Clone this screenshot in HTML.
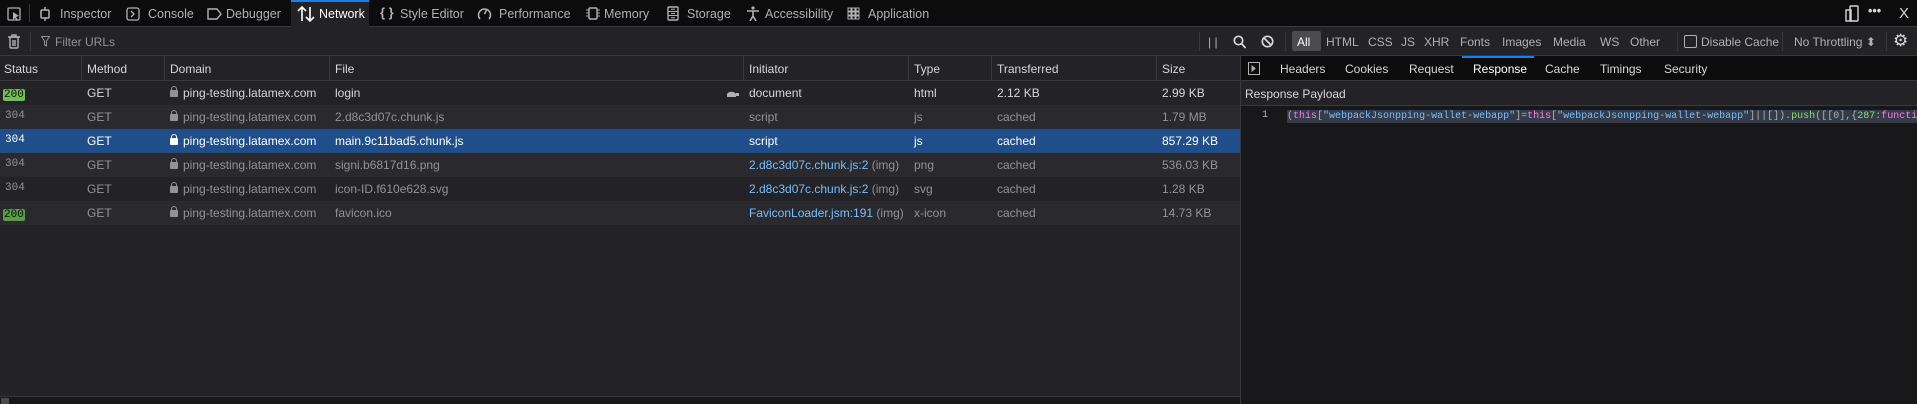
<!DOCTYPE html>
<html><head><meta charset="utf-8"><style>
*{margin:0;padding:0;box-sizing:border-box}
body{width:1917px;height:404px;background:#232327;font-family:"Liberation Sans",sans-serif;font-size:12px;color:#d7d7db;position:relative;overflow:hidden}
.a{position:absolute;white-space:nowrap}
#top{left:0;top:0;width:1917px;height:27px;background:#0c0c0d;border-bottom:1px solid #38383d}
#top .t{position:absolute;top:7px;color:#b1b1b3;font-size:12.5px}
#filt{left:0;top:27px;width:1917px;height:29px;background:#232327;border-bottom:1px solid #38383d}
.f{position:absolute;top:8px;color:#b1b1b3;font-size:12px}
#hdr{left:0;top:56px;width:1240px;height:25px;border-bottom:1px solid #38383d}
.col{position:absolute;top:0;height:100%;border-left:1px solid #38383d}
.h{position:absolute;top:6px;color:#d7d7db}
.row{position:absolute;left:0;width:1240px;height:24px}
.row span{position:absolute;top:5px}
.alt{background:#2a2a2e}
.sel{background:#204e8a;color:#fff}
.dim{color:#939395}
.b2{background:#70bf53;color:#0c0c0d;border-radius:2px;padding:0 1px;font-family:"Liberation Mono",monospace;font-size:11px}
.lnk{color:#75bfff}
.lock{display:inline-block;width:8px;height:7px;background:#939395;border-radius:1px;position:relative;top:0px;margin-right:5px}
.lock:before{content:"";position:absolute;left:1px;top:-4px;width:4px;height:4px;border:1px solid #939395;border-bottom:none;border-radius:3px 3px 0 0}
.sel .lock{background:#fff}
.sel .lock:before{border-color:#fff}
#rp{left:1240px;top:56px;width:677px;height:348px;background:#18181a;border-left:1px solid #38383d}
.dv{position:absolute;top:5px;width:1px;height:19px;background:#38383d}
</style></head><body>
<div class="a" id="top">
 <svg class="a" style="left:7px;top:7px" width="14" height="14"><rect x="1" y="1" width="12" height="12" rx="1" fill="none" stroke="#b1b1b3" stroke-width="1.3"/><path d="M6 5l6 4-3 1 2 3-1 1-2-3-2 2z" fill="#b1b1b3"/></svg>
 <div class="a" style="left:29px;top:4px;width:1px;height:18px;background:#38383d"></div>
 <svg class="a" style="left:39px;top:7px" width="12" height="14"><rect x="2" y="3" width="8" height="8" rx="1" fill="none" stroke="#b1b1b3" stroke-width="1.5"/><path d="M6 0v3M6 11v3" stroke="#b1b1b3" stroke-width="1.5"/></svg>
 <span class="t" style="left:60px">Inspector</span>
 <svg class="a" style="left:126px;top:7px" width="14" height="14"><rect x="1" y="1" width="12" height="12" rx="2" fill="none" stroke="#b1b1b3" stroke-width="1.3"/><path d="M5 4l3 3-3 3" fill="none" stroke="#b1b1b3" stroke-width="1.3"/></svg>
 <span class="t" style="left:148px">Console</span>
 <svg class="a" style="left:207px;top:7px" width="15" height="14"><path d="M1 2h9l4 5-4 5H1z" fill="none" stroke="#b1b1b3" stroke-width="1.4"/></svg>
 <span class="t" style="left:226px">Debugger</span>
 <div class="a" style="left:291px;top:0;width:78px;height:27px;background:#232327;border-top:2px solid #0a84ff"></div>
 <svg class="a" style="left:297px;top:6px" width="18" height="16"><path d="M5 15V1M1 5l4-4 4 4M13 1v14M9 11l4 4 4-4" fill="none" stroke="#fff" stroke-width="1.6"/></svg>
 <span class="t" style="left:319px;color:#fff">Network</span>
 <span class="t" style="left:380px;font-weight:bold;font-size:13px;top:5px">{ }</span>
 <span class="t" style="left:400px">Style Editor</span>
 <svg class="a" style="left:477px;top:6px" width="15" height="15"><path d="M3 13A6 6 0 1 1 12 13" fill="none" stroke="#b1b1b3" stroke-width="1.5"/><path d="M7.5 8l2-4" stroke="#b1b1b3" stroke-width="1.5"/></svg>
 <span class="t" style="left:499px">Performance</span>
 <svg class="a" style="left:586px;top:6px" width="14" height="15"><rect x="3" y="2" width="8" height="11" rx="1" fill="none" stroke="#b1b1b3" stroke-width="1.4"/><path d="M0 4h3M0 7h3M0 10h3M11 4h3M11 7h3M11 10h3" stroke="#b1b1b3"/></svg>
 <span class="t" style="left:604px">Memory</span>
 <svg class="a" style="left:667px;top:6px" width="12" height="15"><rect x="1" y="1" width="10" height="13" rx="1" fill="none" stroke="#b1b1b3" stroke-width="1.4"/><path d="M1 5.5h10M1 9.5h10M4 3.3h4M4 7.5h4M4 11.7h4" stroke="#b1b1b3"/></svg>
 <span class="t" style="left:687px">Storage</span>
 <svg class="a" style="left:746px;top:6px" width="14" height="15"><circle cx="7" cy="2" r="1.6" fill="#b1b1b3"/><path d="M1 5h12M7 5v5M7 10l-3 5M7 10l3 5" stroke="#b1b1b3" stroke-width="1.6" fill="none"/></svg>
 <span class="t" style="left:765px">Accessibility</span>
 <svg class="a" style="left:847px;top:7px" width="13" height="13" fill="none" stroke="#b1b1b3"><rect x="1" y="1" width="3" height="3"/><rect x="5" y="1" width="3" height="3"/><rect x="9" y="1" width="3" height="3"/><rect x="1" y="5" width="3" height="3"/><rect x="5" y="5" width="3" height="3"/><rect x="9" y="5" width="3" height="3"/><rect x="1" y="9" width="3" height="3"/><rect x="5" y="9" width="3" height="3"/><rect x="9" y="9" width="3" height="3"/></svg>
 <span class="t" style="left:868px">Application</span>
 <svg class="a" style="left:1845px;top:5px" width="14" height="17" fill="none" stroke="#d7d7db" stroke-width="1.4"><rect x="5" y="1" width="8" height="15" rx="1"/><rect x="1" y="5" width="5" height="11"/></svg>
 <span class="t" style="left:1868px;top:4px;color:#d7d7db;font-weight:bold">•••</span>
 <span class="t" style="left:1899px;top:5px;color:#d7d7db;font-size:15px">X</span>
</div>
<div class="a" id="filt">
 <svg class="a" style="left:8px;top:7px" width="12" height="15" fill="none" stroke="#b1b1b3" stroke-width="1.4"><path d="M0 3h12M4 3V1h4v2"/><rect x="2" y="3" width="8" height="11" rx="1"/><path d="M5 6v6M7 6v6"/></svg>
 <div class="dv" style="left:30px"></div>
 <svg class="a" style="left:41px;top:9px" width="9" height="11" fill="none" stroke="#939395"><path d="M0.5 0.5h8L5.5 5v5l-2-1V5z"/></svg>
 <span class="f" style="left:55px;color:#939395">Filter URLs</span>
 <div class="dv" style="left:1199px"></div>
 <span class="f" style="left:1208px">| |</span>
 <svg class="a" style="left:1233px;top:8px" width="13" height="14" fill="none" stroke="#d7d7db" stroke-width="1.7"><circle cx="5.5" cy="5.5" r="4.2"/><path d="M8.5 8.5l4 4.5"/></svg>
 <svg class="a" style="left:1261px;top:8px" width="13" height="13" fill="none" stroke="#d7d7db" stroke-width="1.7"><circle cx="6.5" cy="6.5" r="5.2"/><path d="M3 3l7 7"/></svg>
 <div class="dv" style="left:1285px"></div>
 <div class="a" style="left:1292px;top:4px;width:29px;height:20px;background:#4a4a4f;border-radius:2px"></div>
 <span class="f" style="left:1297px;color:#fff">All</span>
 <span class="f" style="left:1326px">HTML</span>
 <span class="f" style="left:1368px">CSS</span>
 <span class="f" style="left:1401px">JS</span>
 <span class="f" style="left:1424px">XHR</span>
 <span class="f" style="left:1460px">Fonts</span>
 <span class="f" style="left:1502px">Images</span>
 <span class="f" style="left:1553px">Media</span>
 <span class="f" style="left:1600px">WS</span>
 <span class="f" style="left:1630px">Other</span>
 <div class="dv" style="left:1677px"></div>
 <div class="a" style="left:1684px;top:8px;width:13px;height:13px;border:1px solid #b1b1b3;border-radius:2px"></div>
 <span class="f" style="left:1701px">Disable Cache</span>
 <div class="dv" style="left:1782px"></div>
 <span class="f" style="left:1794px">No Throttling ⬍</span>
 <div class="dv" style="left:1886px"></div>
 <span class="f" style="left:1893px;top:4px;font-size:17px;color:#d7d7db">⚙</span>
</div>
<div class="a" id="hdr">
 <span class="h" style="left:4px">Status</span>
 <div class="col" style="left:81px"></div><span class="h" style="left:87px">Method</span>
 <div class="col" style="left:164px"></div><span class="h" style="left:170px">Domain</span>
 <div class="col" style="left:329px"></div><span class="h" style="left:335px">File</span>
 <div class="col" style="left:743px"></div><span class="h" style="left:749px">Initiator</span>
 <div class="col" style="left:908px"></div><span class="h" style="left:914px">Type</span>
 <div class="col" style="left:991px"></div><span class="h" style="left:997px">Transferred</span>
 <div class="col" style="left:1156px"></div><span class="h" style="left:1162px">Size</span>
</div>
<div class="a" style="left:0;top:81px;width:1240px;height:144px">
 <div class="row" style="top:0"><span style="left:3px"><b class="b2" style="font-weight:normal">200</b></span><span style="left:87px">GET</span><span style="left:170px"><i class="lock"></i>ping-testing.latamex.com</span><span style="left:335px">login</span><svg class="a" style="left:725px;top:8px" width="14" height="9"><path d="M2 8V5a5 4 0 0 1 9 0v3zM11 4h3v3h-3z" fill="#b1b1b3"/></svg><span style="left:749px">document</span><span style="left:914px">html</span><span style="left:997px">2.12 KB</span><span style="left:1162px">2.99 KB</span></div>
 <div class="row alt dim" style="top:24px"><span style="left:5px;font-family:'Liberation Mono',monospace;font-size:11px">304</span><span style="left:87px">GET</span><span style="left:170px"><i class="lock"></i>ping-testing.latamex.com</span><span style="left:335px">2.d8c3d07c.chunk.js</span><span style="left:749px">script</span><span style="left:914px">js</span><span style="left:997px">cached</span><span style="left:1162px">1.79 MB</span></div>
 <div class="row sel" style="top:48px"><span style="left:5px;font-family:'Liberation Mono',monospace;font-size:11px">304</span><span style="left:87px">GET</span><span style="left:170px"><i class="lock"></i>ping-testing.latamex.com</span><span style="left:335px">main.9c11bad5.chunk.js</span><span style="left:749px">script</span><span style="left:914px">js</span><span style="left:997px">cached</span><span style="left:1162px">857.29 KB</span></div>
 <div class="row alt dim" style="top:72px"><span style="left:5px;font-family:'Liberation Mono',monospace;font-size:11px">304</span><span style="left:87px">GET</span><span style="left:170px"><i class="lock"></i>ping-testing.latamex.com</span><span style="left:335px">signi.b6817d16.png</span><span style="left:749px"><a class="lnk">2.d8c3d07c.chunk.js:2</a> (img)</span><span style="left:914px">png</span><span style="left:997px">cached</span><span style="left:1162px">536.03 KB</span></div>
 <div class="row dim" style="top:96px"><span style="left:5px;font-family:'Liberation Mono',monospace;font-size:11px">304</span><span style="left:87px">GET</span><span style="left:170px"><i class="lock"></i>ping-testing.latamex.com</span><span style="left:335px">icon-ID.f610e628.svg</span><span style="left:749px"><a class="lnk">2.d8c3d07c.chunk.js:2</a> (img)</span><span style="left:914px">svg</span><span style="left:997px">cached</span><span style="left:1162px">1.28 KB</span></div>
 <div class="row alt dim" style="top:120px"><span style="left:3px"><b class="b2" style="font-weight:normal;background:#5a9e44">200</b></span><span style="left:87px">GET</span><span style="left:170px"><i class="lock"></i>ping-testing.latamex.com</span><span style="left:335px">favicon.ico</span><span style="left:749px"><a class="lnk">FaviconLoader.jsm:191</a> (img)</span><span style="left:914px">x-icon</span><span style="left:997px">cached</span><span style="left:1162px">14.73 KB</span></div>
</div>
<div class="a" style="left:0;top:396px;width:1240px;height:1px;background:#38383d"></div>
<div class="a" style="left:0;top:397px;width:1240px;height:7px;background:#18181a"></div>
<div class="a" style="left:1px;top:398px;width:8px;height:6px;background:#4a4a4f"></div>
<div class="a" id="rp">
 <div class="a" style="left:0;top:0;width:677px;height:25px;background:#0c0c0d;border-bottom:1px solid #38383d"></div>
 <svg class="a" style="left:7px;top:6px" width="12" height="13" fill="none" stroke="#b1b1b3"><rect x="0.5" y="0.5" width="11" height="12"/><path d="M4 4l3 2.5L4 9z" fill="#b1b1b3"/></svg>
 <span class="a" style="left:39px;top:6px">Headers</span>
 <span class="a" style="left:104px;top:6px">Cookies</span>
 <span class="a" style="left:168px;top:6px">Request</span>
 <div class="a" style="left:221px;top:0;width:72px;height:2px;background:#0a84ff"></div>
 <span class="a" style="left:232px;top:6px;color:#fff">Response</span>
 <span class="a" style="left:304px;top:6px">Cache</span>
 <span class="a" style="left:359px;top:6px">Timings</span>
 <span class="a" style="left:423px;top:6px">Security</span>
 <div class="a" style="left:0;top:25px;width:677px;height:25px;background:#232327;border-bottom:1px solid #38383d"></div>
 <span class="a" style="left:4px;top:31px">Response Payload</span>
 <span class="a" style="left:21px;top:54px;font-family:'Liberation Mono',monospace;font-size:10px;color:#b1b1b3">1</span>
 <span class="a" style="left:46px;top:54px;font-family:'Liberation Mono',monospace;font-size:10px;line-height:13px;background:#353b48;color:#b1b1b3">(<span style="color:#ff7de9">this</span>[<span style="color:#75bfff">"webpackJsonpping-wallet-webapp"</span>]=<span style="color:#ff7de9">this</span>[<span style="color:#75bfff">"webpackJsonpping-wallet-webapp"</span>]||[]).<span style="color:#86de74">push</span>([[0],{<span style="color:#86de74">287</span>:<span style="color:#ff7de9">functi</span></span>
</div>
</body></html>
